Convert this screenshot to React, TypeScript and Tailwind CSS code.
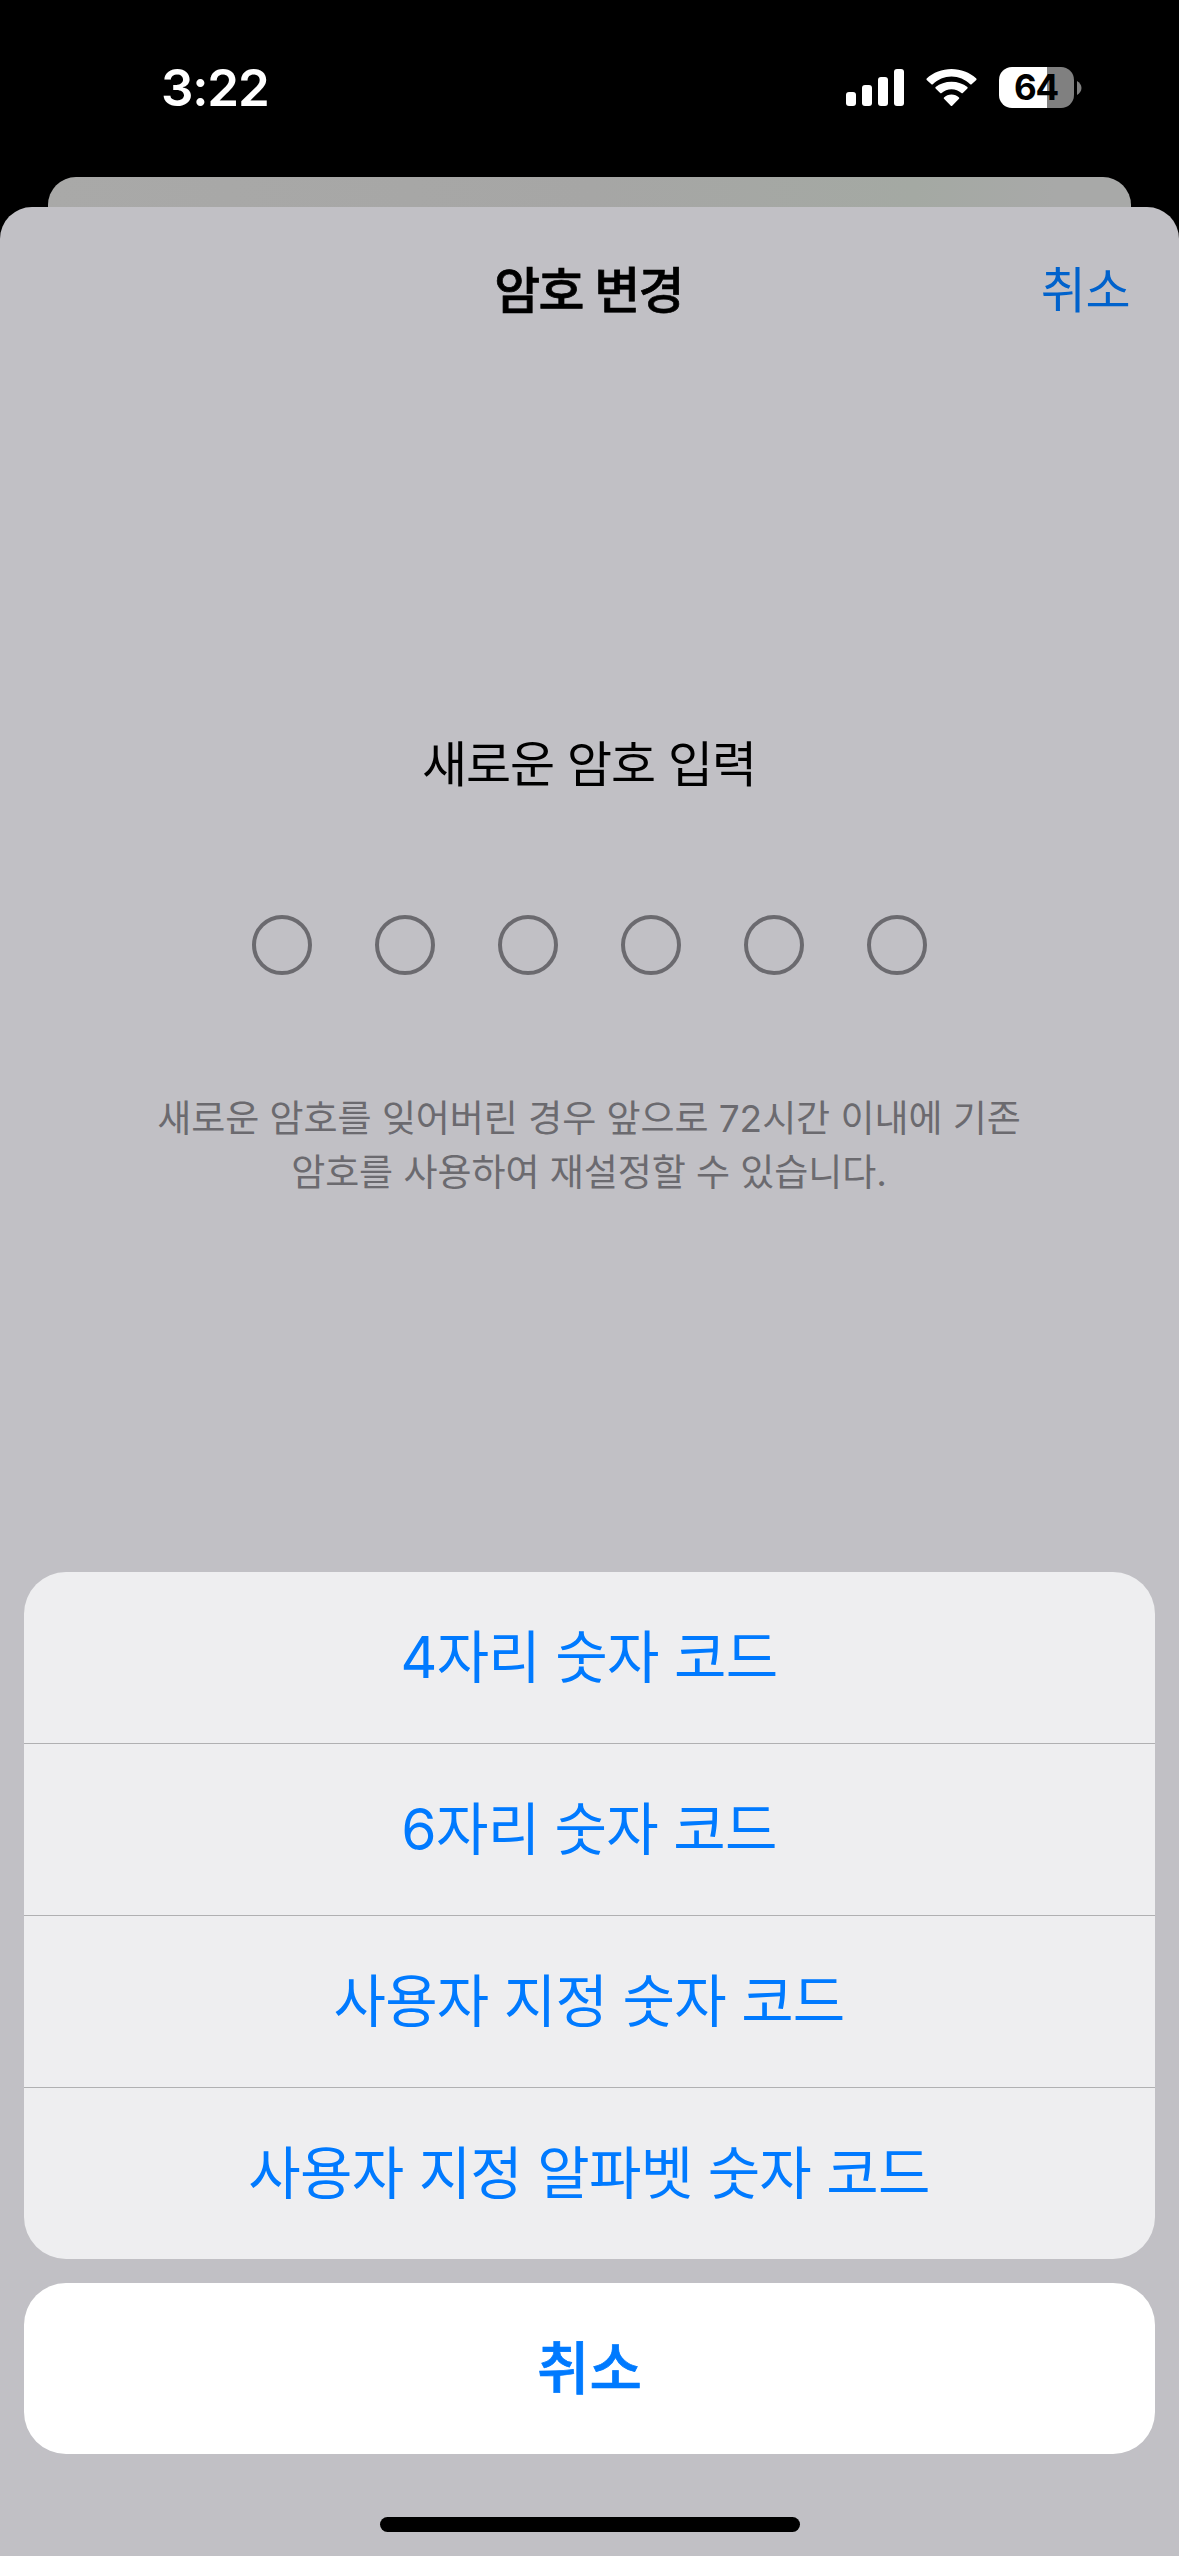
const OPTIONS = [
  '4자리 숫자 코드',
  '6자리 숫자 코드',
  '사용자 지정 숫자 코드',
  '사용자 지정 알파벳 숫자 코드',
];

const PASSCODE_LENGTH = 6;

function SignalIcon() {
  return (
    <svg width="58" height="37" viewBox="0 0 58 37" fill="white">
      <rect x="0" y="23" width="10" height="14" rx="3" />
      <rect x="16" y="16" width="10" height="21" rx="3" />
      <rect x="32" y="8" width="10" height="29" rx="3" />
      <rect x="48" y="0" width="10" height="37" rx="3" />
    </svg>
  );
}

function WifiIcon() {
  return (
    <svg width="51" height="38" viewBox="0 0 51 38" fill="white">
      <path d="M25.5 7.5C32.6 7.5 39.2 10.4 44.2 15.3C44.6 15.7 45.2 15.7 45.6 15.3L50.3 10.9C50.7 10.5 50.7 9.9 50.3 9.5C43.7 3.5 34.9 0 25.5 0S7.3 3.5 .7 9.5C.3 9.9 .3 10.5 .7 10.9L5.4 15.3C5.8 15.7 6.4 15.7 6.8 15.3C11.8 10.4 18.4 7.5 25.5 7.5Z" />
      <path d="M25.5 20.2C29.3 20.2 32.7 21.6 35.4 23.9C35.8 24.3 36.4 24.3 36.8 23.9L41.4 19.5C41.8 19.1 41.8 18.5 41.4 18.1C37.2 14.6 31.6 12.7 25.5 12.7S13.8 14.6 9.6 18.1C9.2 18.5 9.2 19.1 9.6 19.5L14.2 23.9C14.6 24.3 15.2 24.3 15.6 23.9C18.3 21.6 21.7 20.2 25.5 20.2Z" />
      <path d="M33 28.4C33.4 28.8 33.4 29.4 33 29.8L26.2 36.7C25.8 37.1 25.2 37.1 24.8 36.7L18 29.8C17.6 29.4 17.6 28.8 18 28.4C20 26.6 22.6 25.5 25.5 25.5S31 26.6 33 28.4Z" />
    </svg>
  );
}

function Battery({ level }: { level: number }) {
  return (
    <div className="flex items-center gap-[3px]">
      <div className="flex h-[41px] w-[75px] items-center justify-center rounded-[13px] bg-[linear-gradient(to_right,#ffffff_48px,#808080_48px)]">
        <span className="mr-px text-[35px] leading-[41px] font-bold tracking-[-1.2px] text-black">{level}</span>
      </div>
      <svg width="5" height="14" viewBox="0 0 5 14" fill="#808080">
        <path d="M0 0C2.5 1.5 4.5 4 4.5 7S2.5 12.5 0 14Z" />
      </svg>
    </div>
  );
}

function StatusBar() {
  return (
    <div className="flex h-[177px] shrink-0 items-start justify-between pt-[67px] pr-[97px] pl-[161px] text-white">
      <span className="text-[51px] leading-[41px] font-semibold tracking-[-1.2px]">3:22</span>
      <div className="flex h-[41px] items-center gap-[22px]">
        <SignalIcon />
        <WifiIcon />
        <Battery level={64} />
      </div>
    </div>
  );
}

function ActionSheet() {
  return (
    <div className="mt-auto flex flex-col gap-6 px-6 text-[57px] text-[#007aff]">
      <div className="overflow-hidden rounded-[42px] bg-[#eeeef0]">
        {OPTIONS.map((label, i) => (
          <button
            key={label}
            className={`flex w-full items-center justify-center pr-px tracking-[-0.75px] ${
              i === 0 ? 'h-[171px]' : 'h-[172px] border-t border-[#b0b0b2]'
            }`}
          >
            {label}
          </button>
        ))}
      </div>
      <button className="flex h-[171px] items-center justify-center rounded-[42px] bg-white font-medium [-webkit-text-stroke:0.7px_currentColor]">
        취소
      </button>
    </div>
  );
}

export default function App() {
  return (
    <div className="flex h-[2556px] w-[1179px] flex-col overflow-hidden bg-black font-[Inter,'Noto_Sans_CJK_KR',sans-serif]">
      <StatusBar />
      {/* Card underneath the current sheet */}
      <div className="mx-12 h-[30px] shrink-0 rounded-t-[28px] bg-[linear-gradient(to_right,#a9a9a8,#a6a6a5_50%,#a4a9a3_80%,#a8a9a8_93%)]" />

      <div className="flex flex-1 flex-col rounded-t-[32px] bg-[#c1c0c5]">
        <header className="grid h-[168px] grid-cols-3 items-center px-[49px]">
          <h1 className="col-start-2 pr-0.5 text-center text-[50px] font-medium tracking-[-1.8px] text-black [-webkit-text-stroke:0.7px_currentColor]">
            암호 변경
          </h1>
          <button className="justify-self-end text-[49px] tracking-[-0.5px] text-[#0062cc]">취소</button>
        </header>

        <main className="flex flex-col items-center">
          <h2 className="mt-[354px] pr-px text-[49px] leading-[72px] tracking-[-1px] text-black">새로운 암호 입력</h2>
          <div className="mt-[114px] flex gap-[63px]">
            {Array.from({ length: PASSCODE_LENGTH }, (_, i) => (
              <span key={i} className="size-[60px] rounded-full border-4 border-[#6b6a6f]" />
            ))}
          </div>
          <p className="mt-[117px] pr-px text-center text-[37px] leading-[54px] tracking-[-0.06px] text-[#6b6a6f]">
            새로운 암호를 잊어버린 경우 앞으로 72시간 이내에 기존
            <br />
            암호를 사용하여 재설정할 수 있습니다.
          </p>
        </main>

        <ActionSheet />

        <div className="mx-auto mt-[63px] mb-6 h-[15px] w-[420px] shrink-0 rounded-full bg-black" />
      </div>
    </div>
  );
}
